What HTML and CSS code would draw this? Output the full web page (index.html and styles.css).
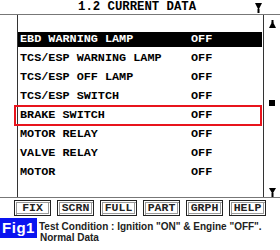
FILE: index.html
```html
<!DOCTYPE html>
<html lang="en">
<head>
    <meta charset="UTF-8">
    <meta name="viewport" content="width=device-width, initial-scale=1.0">
    <title>1.2 Current Data</title>
    <link rel="stylesheet" href="styles.css">
</head>
<body>
    <div class="screen">
        <div class="header">
            <span class="title">1.2 CURRENT DATA</span>
            <svg class="arrow-down head-arrow" width="7" height="10" viewBox="0 0 7 10">
                <polygon points="0,0 7,0 3.5,7" fill="#000"/>
                <rect x="2.5" y="6" width="2" height="4" fill="#000"/>
            </svg>
        </div>

        <div class="main">
            <div class="gutter"></div>
            <div class="list">
                <div class="row selected"><span class="label">EBD WARNING LAMP</span><span class="value">OFF</span></div>
                <div class="row"><span class="label">TCS/ESP WARNING LAMP</span><span class="value">OFF</span></div>
                <div class="row"><span class="label">TCS/ESP OFF LAMP</span><span class="value">OFF</span></div>
                <div class="row"><span class="label">TCS/ESP SWITCH</span><span class="value">OFF</span></div>
                <div class="row marked"><span class="label">BRAKE SWITCH</span><span class="value">OFF</span></div>
                <div class="row"><span class="label">MOTOR RELAY</span><span class="value">OFF</span></div>
                <div class="row"><span class="label">VALVE RELAY</span><span class="value">OFF</span></div>
                <div class="row"><span class="label">MOTOR</span><span class="value">OFF</span></div>
            </div>
            <div class="scroll">
                <svg class="scroll-up" width="7" height="8" viewBox="0 0 7 8">
                    <rect x="2.5" y="0" width="2" height="3" fill="#000"/>
                    <polygon points="3.5,1 7,8 0,8" fill="#000"/>
                </svg>
                <div class="thumb"></div>
                <svg class="scroll-down" width="7" height="9" viewBox="0 0 7 9">
                    <polygon points="0,0 7,0 3.5,6" fill="#000"/>
                    <rect x="2.5" y="5" width="2" height="4" fill="#000"/>
                </svg>
            </div>
        </div>

        <div class="buttons">
            <div class="btn">FIX</div>
            <div class="btn">SCRN</div>
            <div class="btn">FULL</div>
            <div class="btn">PART</div>
            <div class="btn">GRPH</div>
            <div class="btn">HELP</div>
        </div>
    </div>

    <div class="footer">
        <div class="fig">Fig1</div>
        <div class="caption">
            <div>Test Condition : Ignition "ON" &amp; Engine "OFF".</div>
            <div class="sub">Normal Data</div>
        </div>
    </div>
</body>
</html>
```

FILE: styles.css
```css
* {
    margin: 0;
    padding: 0;
    box-sizing: border-box;
}

body {
    width: 280px;
    height: 250px;
    background: #fff;
    color: #000;
    overflow: hidden;
}

.screen {
    font-family: "Liberation Mono", monospace;
    font-weight: bold;
}

.header {
    height: 15px;
    display: flex;
    align-items: center;
    padding-left: 78px;
    border-bottom: 1px solid #777;
    font-size: 12.3px;
    line-height: 14px;
}

.title {
    width: 177px;
}

.head-arrow {
    margin-top: 1px;
}

.main {
    display: flex;
    height: 183px;
    border-bottom: 1px solid #777;
}

.gutter {
    width: 18px;
    border-right: 1px solid #333;
}

.list {
    flex: 1;
    padding: 17px 1px 0 0;
    display: flex;
    flex-direction: column;
    gap: 4px;
    border-right: 1px solid #333;
}

.row {
    position: relative;
    display: flex;
    height: 15px;
    line-height: 15px;
    padding-left: 2px;
    font-size: 11.8px;
}

.row .label {
    width: 171px;
}

.row.selected {
    background: #000;
    color: #fff;
}

.row.marked::after {
    content: "";
    position: absolute;
    left: -4px;
    right: 0;
    top: -3px;
    bottom: -3px;
    border: 2px solid #e8141c;
}

.scroll {
    width: 16px;
    display: flex;
    flex-direction: column;
    align-items: center;
    padding-top: 5px;
}

.thumb {
    width: 6px;
    height: 6px;
    background: #000;
    margin-top: 72px;
}

.scroll-down {
    margin-top: 82px;
}

.buttons {
    display: flex;
    gap: 6px;
    padding: 2px 0 2px 14px;
}

.btn {
    width: 37px;
    height: 16px;
    border: 1px solid #222;
    box-shadow: inset 1px 1px 0 #fff, inset 2px 2px 0 #999, inset -1px -1px 0 #fff, inset -2px -2px 0 #999;
    font-size: 11.5px;
    line-height: 14px;
    text-align: center;
    color: #222;
}

.footer {
    display: flex;
    font-family: "Liberation Sans", Arial, sans-serif;
}

.fig {
    width: 37px;
    height: 20px;
    background: #0a14f0;
    color: #fff;
    font-size: 15px;
    font-weight: bold;
    line-height: 20px;
    text-align: center;
    letter-spacing: 0.5px;
}

.caption {
    padding: 3px 0 0 2px;
    font-size: 10px;
    font-weight: bold;
    line-height: 11px;
    color: #222;
}

.caption .sub {
    padding-left: 1px;
}
```
